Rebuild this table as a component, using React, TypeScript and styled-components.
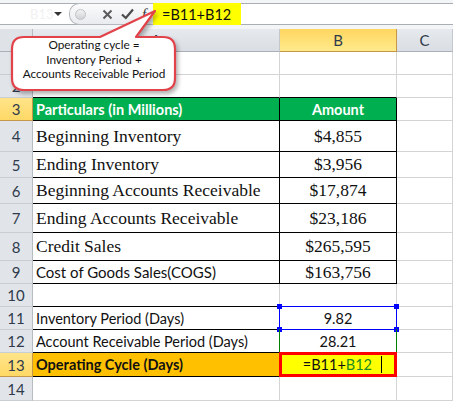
import styled, { createGlobalStyle } from "styled-components";

const GlobalStyle = createGlobalStyle`
  html, body {
    margin: 0;
    padding: 0;
    background: #ffffff;
  }
  body {
    font-family: Lato, "Open Sans", sans-serif;
  }
`

const SANS = `Lato, "Open Sans", sans-serif`
const SERIF = `"Liberation Serif", "Times New Roman", serif`
const GRID = '#d4d4d4'
const BLACK = '#000000'

const Screen = styled.div`
  position: relative;
  width: 453px;
  height: 401px;
  overflow: hidden;
  background: #ffffff;
`

const BarWrap = styled.div`
  height: 29px;
  padding-top: 3px;
  box-sizing: border-box;
  background: #f4f5f7;
`

const FormulaRow = styled.div`
  display: flex;
  height: 22px;
  border-top: 1px solid #a9aeb5;
  border-bottom: 1px solid #a9aeb5;
  background: #ffffff;
  box-sizing: border-box;
`

const NameBox = styled.div`
  width: 69px;
  display: flex;
  align-items: center;
  justify-content: space-between;
  padding: 0 7px 0 30px;
  box-sizing: border-box;
  font-size: 13px;
  color: #f1f1f1;
`

const DropArrow = styled.span`
  width: 0;
  height: 0;
  border-left: 4px solid transparent;
  border-right: 4px solid transparent;
  border-top: 4px solid #333;
`

const Pill = styled.div`
  width: 84px;
  display: flex;
  align-items: center;
  border: 1px solid #b4b8be;
  border-right: none;
  border-radius: 10px 0 0 10px;
  background: linear-gradient(#fbfbfc, #e9ebee);
  box-sizing: border-box;
  margin-top: -1px;
  margin-bottom: -1px;
`

const Knob = styled.span`
  width: 9px;
  height: 9px;
  margin: 0 11px 0 5px;
  border-radius: 50%;
  border: 1px solid #bfc3c8;
  background: linear-gradient(#f3f3f3, #cfd2d6);
`

const IconSlot = styled.span<{ $w: number }>`
  width: ${p => p.$w}px;
  display: flex;
  justify-content: center;
  align-items: center;
`

const Fx = styled.span`
  font-family: ${SERIF};
  font-style: italic;
  font-size: 15px;
  color: #333;
`

const FormulaInput = styled.div`
  width: 88px;
  display: flex;
  align-items: center;
  padding-left: 9px;
  box-sizing: border-box;
  background: #ffff00;
  font-family: ${SANS};
  font-size: 14.5px;
  color: #111;
  margin-top: -1px;
  margin-bottom: -1px;
`

const Sheet = styled.div`
  display: grid;
  grid-template-columns: 33px 247px 117px 56px;
  grid-template-rows: 23px 23px 23px 23px 31px 26px 26px 29px 28px 23px 23px 23px 23px 24px 24px;
`

const Corner = styled.div`
  background: #dfe3e8;
  border-right: 1px solid #b7bcc3;
  border-bottom: 1px solid #aab0b8;
  box-sizing: border-box;
`

const ColHead = styled.div<{ $active?: boolean }>`
  display: flex;
  align-items: center;
  justify-content: center;
  box-sizing: border-box;
  font-family: ${SANS};
  font-size: 15px;
  color: #2f3b4c;
  background: ${p => p.$active ? 'linear-gradient(#ffd660, #ffea8c)' : 'linear-gradient(#e6e9ed, #dadee4)'};
  border-right: 1px solid ${p => p.$active ? '#c59849' : '#c3c8ce'};
  border-bottom: 1px solid ${p => p.$active ? '#c59849' : '#aab0b8'};
`

const RowHead = styled.div<{ $active?: boolean }>`
  display: flex;
  align-items: center;
  justify-content: center;
  box-sizing: border-box;
  font-family: ${SANS};
  font-size: 15px;
  color: #2f3b4c;
  background: ${p => p.$active ? 'linear-gradient(#ffe48a, #ffd966)' : '#e1e5ea'};
  border-right: 1px solid ${p => p.$active ? '#c59849' : '#b7bcc3'};
  border-bottom: 1px solid ${p => p.$active ? '#c59849' : '#c9ced5'};
`

type CellProps = {
  $bg?: string
  $bb?: string
  $br?: string
  $align?: 'left' | 'center' | 'right'
  $face?: 'serif' | 'sans'
  $size?: number
  $bold?: boolean
  $color?: string
}

const Cell = styled.div<CellProps>`
  position: relative;
  display: flex;
  align-items: center;
  justify-content: ${p => p.$align === 'center' ? 'center' : p.$align === 'right' ? 'flex-end' : 'flex-start'};
  padding: 0 3px;
  box-sizing: border-box;
  white-space: nowrap;
  background: ${p => p.$bg ?? '#ffffff'};
  border-right: 1px solid ${p => p.$br ?? GRID};
  border-bottom: 1px solid ${p => p.$bb ?? GRID};
  font-family: ${p => p.$face === 'serif' ? SERIF : SANS};
  font-size: ${p => p.$size ?? 14.5}px;
  font-weight: ${p => p.$bold ? 700 : 400};
  color: ${p => p.$color ?? '#111111'};
`

const Select = styled.div<{ $color: string; $sides?: boolean }>`
  position: absolute;
  z-index: 1;
  top: -1px;
  left: -1px;
  right: -1px;
  bottom: -1px;
  border: 1px solid ${p => p.$color};
  ${p => p.$sides ? 'border-top: none; border-bottom: none;' : ''}
  pointer-events: none;
`

const Handle = styled.span<{ $x: 'l' | 'r'; $y: 't' | 'b' }>`
  position: absolute;
  width: 5px;
  height: 5px;
  background: #0000ff;
  ${p => p.$x === 'l' ? 'left: -3px;' : 'right: -3px;'}
  ${p => p.$y === 't' ? 'top: -3px;' : 'bottom: -3px;'}
`

const EditBox = styled.div`
  position: absolute;
  z-index: 2;
  top: -1px;
  left: -1px;
  right: -1px;
  bottom: -1px;
  display: flex;
  align-items: center;
  justify-content: flex-end;
  padding-right: 12px;
  border: 3px solid #ff0000;
  background: #ffff00;
  font-family: ${SANS};
  font-size: 14.5px;
  color: #111;
`

const Ref = styled.span`
  color: #218a21;
`

const Caret = styled.span`
  width: 1px;
  height: 17px;
  margin-left: 9px;
  background: #000;
`

const Callout = styled.div`
  position: absolute;
  z-index: 5;
  left: 0;
  top: 0;
  width: 190px;
  height: 100px;
  pointer-events: none;
`

const CalloutText = styled.div`
  position: absolute;
  left: 14px;
  top: 38px;
  width: 160px;
  text-align: center;
  font-family: ${SANS};
  font-size: 11.8px;
  line-height: 14.5px;
  color: #141414;
`

const serifRows = [
  { n: 4, a: 'Beginning Inventory', b: '$4,855' },
  { n: 5, a: 'Ending Inventory', b: '$3,956' },
  { n: 6, a: 'Beginning Accounts Receivable', b: '$17,874' },
  { n: 7, a: 'Ending Accounts Receivable', b: '$23,186' },
  { n: 8, a: 'Credit Sales', b: '$265,595' },
]

const App = () => {
  return <>
    <GlobalStyle />
    <Screen>
      <BarWrap>
        <FormulaRow>
          <NameBox>
            B13
            <DropArrow />
          </NameBox>
          <Pill>
            <Knob />
            <IconSlot $w={20}>
              <svg width="11" height="11" viewBox="0 0 11 11">
                <path d="M1.5 1.5 L9.5 9.5 M9.5 1.5 L1.5 9.5" stroke="#5a5a5a" strokeWidth="2" />
              </svg>
            </IconSlot>
            <IconSlot $w={20}>
              <svg width="13" height="12" viewBox="0 0 13 12">
                <path d="M1 6.5 L4.8 10 L12 1.5" stroke="#4a4a4a" strokeWidth="2.2" fill="none" />
              </svg>
            </IconSlot>
            <IconSlot $w={14}>
              <Fx>f</Fx>
            </IconSlot>
          </Pill>
          <FormulaInput>=B11+B12</FormulaInput>
        </FormulaRow>
      </BarWrap>

      <Sheet>
        <Corner />
        <ColHead>A</ColHead>
        <ColHead $active>B</ColHead>
        <ColHead>C</ColHead>

        <RowHead>1</RowHead>
        <Cell />
        <Cell />
        <Cell />

        <RowHead>2</RowHead>
        <Cell $bb={BLACK} />
        <Cell $bb={BLACK} />
        <Cell />

        <RowHead $active>3</RowHead>
        <Cell $bg="#00b050" $bb={BLACK} $br={BLACK} $bold $color="#ffffff" $size={14.5}>Particulars (in Millions)</Cell>
        <Cell $bg="#00b050" $bb={BLACK} $br={BLACK} $bold $color="#ffffff" $size={14.5} $align="center">Amount</Cell>
        <Cell />

        {serifRows.map(r => [
          <RowHead key={`h${r.n}`}>{r.n}</RowHead>,
          <Cell key={`a${r.n}`} $face="serif" $size={17.5} $bb={BLACK} $br={BLACK}>{r.a}</Cell>,
          <Cell key={`b${r.n}`} $face="serif" $size={17.5} $bb={BLACK} $br={BLACK} $align="center">{r.b}</Cell>,
          <Cell key={`c${r.n}`} />,
        ])}

        <RowHead>9</RowHead>
        <Cell $bb={BLACK} $br={BLACK} $size={15}>Cost of Goods Sales(COGS)</Cell>
        <Cell $face="serif" $size={17.5} $bb={BLACK} $br={BLACK} $align="center">$163,756</Cell>
        <Cell />

        <RowHead>10</RowHead>
        <Cell $bb={BLACK} />
        <Cell />
        <Cell />

        <RowHead>11</RowHead>
        <Cell $bb={BLACK}>Inventory Period (Days)</Cell>
        <Cell $align="center">
          9.82
          <Select $color="#0000ff">
            <Handle $x="l" $y="t" />
            <Handle $x="r" $y="t" />
            <Handle $x="l" $y="b" />
            <Handle $x="r" $y="b" />
          </Select>
        </Cell>
        <Cell />

        <RowHead>12</RowHead>
        <Cell $bb={BLACK}>Account Receivable Period (Days)</Cell>
        <Cell $align="center">
          28.21
          <Select $color="#008000" $sides />
        </Cell>
        <Cell />

        <RowHead $active>13</RowHead>
        <Cell $bg="#ffc000" $bb={BLACK} $bold>Operating Cycle (Days)</Cell>
        <Cell>
          <EditBox>
            =B11+<Ref>B12</Ref>
            <Caret />
          </EditBox>
        </Cell>
        <Cell />

        <RowHead>14</RowHead>
        <Cell />
        <Cell />
        <Cell />
      </Sheet>

      <Callout>
        <svg width="190" height="100" viewBox="0 0 190 100" style={{ filter: 'drop-shadow(2px 3px 2px rgba(0,0,0,0.3))' }}>
          <path
            d="M24 37 L100 37 L155 11 L136 37 L163 37 Q175 37 175 49 L175 78 Q175 90 163 90 L24 90 Q12 90 12 78 L12 49 Q12 37 24 37 Z"
            fill="#ffffff"
            stroke="#e2434b"
            strokeWidth="2.2"
            strokeLinejoin="round"
          />
        </svg>
        <CalloutText>
          Operating cycle =<br />
          Inventory Period +<br />
          Accounts Receivable Period
        </CalloutText>
      </Callout>
    </Screen>
  </>;
}

export default App;
